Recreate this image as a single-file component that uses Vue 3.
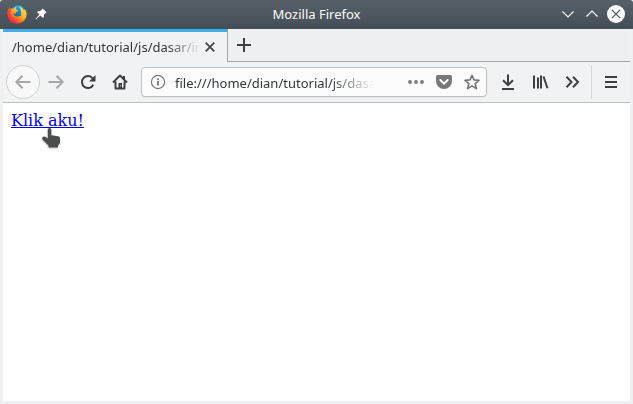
<script setup>
const tabTitle = '/home/dian/tutorial/js/dasar/index.html'
const address = 'file:///home/dian/tutorial/js/dasar/index.html'
</script>

<template>
  <div class="window">
    <header class="titlebar">
      <svg class="firefox" viewBox="0 0 20 20">
        <defs>
          <linearGradient id="flame" x1="0.9" y1="0.1" x2="0.2" y2="0.9">
            <stop offset="0" stop-color="#ffe04a" />
            <stop offset="0.35" stop-color="#ffc02a" />
            <stop offset="0.65" stop-color="#ff7a20" />
            <stop offset="1" stop-color="#ed1c54" />
          </linearGradient>
          <linearGradient id="globe" x1="0.6" y1="0" x2="0.3" y2="1">
            <stop offset="0" stop-color="#18b5f5" />
            <stop offset="1" stop-color="#174a9c" />
          </linearGradient>
        </defs>
        <circle cx="11" cy="8.600" r="7.300" fill="url(#globe)" />
        <path fill="url(#flame)" d="M2.600 3.200 4 5c1-.6 2-.6 3-.4.7-1 1.600-1.700 2.700-2-.7.9-.9 1.700-.6 2.600.8.8 2 .6 2.100 1.300 0 .8-1.500 1-2.100 1.800-.3.500.1 1.200-.5 1.400-.7.3-1.200-.1-1.800-.1.3 2 2 3.200 3.600 3 1.700-.1 2.700-1.300 4-1.100-.6-3.200.3-6-2.900-9.300C15 3 16.600 5 17 7l.7-2.100C19.400 7.200 20 9.700 19.400 12.200 18.300 16.800 14.600 19.500 10 19.500 4.900 19.500.800 15.500.500 10.500.400 7.800 1.200 5.200 2.600 3.200Z" />
        <path fill="#f2353c" d="M2.600 3.200C1.200 5.200.400 7.800.500 10.500c.3 5 4.400 9 9.500 9 1.300 0 2.500-.2 3.700-.7-4 .1-7.900-1.700-9.700-4.800C2.800 11.400 3.300 8 4 5Z" opacity=".75" />
      </svg>
      <svg class="pin" viewBox="0 0 12 12">
        <path fill="#fcfcfc" d="M7.600.4 11.600 4.300 10.500 4.900 8.900 6.700 8.800 9.300 7.800 9.700 5.300 7.400 1 11.500.5 11 4.400 6.600 2.200 4.200 2.800 3.200 5.200 3.100 7 1.500Z" />
      </svg>
      <div class="caption">Mozilla Firefox</div>
      <svg class="ctl" viewBox="0 0 24 24"><path d="M6.500 9.500 12 15l5.500-5.500" /></svg>
      <svg class="ctl" viewBox="0 0 24 24"><path d="M6.500 14.500 12 9l5.500 5.500" /></svg>
      <svg class="ctl close" viewBox="0 0 24 24">
        <circle cx="12" cy="12" r="9" />
        <path d="m7.800 7.800 8.400 8.400m0-8.400-8.400 8.400" />
      </svg>
    </header>

    <div class="tabs">
      <div class="tab">
        <span class="tab-title">{{ tabTitle }}</span>
        <svg class="tab-close" viewBox="0 0 12 12"><path d="m1.700 1.700 8.600 8.600m0-8.600-8.600 8.600" /></svg>
      </div>
      <div class="tab-rest">
        <svg class="plus" viewBox="0 0 16 16"><path d="M8 1v14M1 8h14" /></svg>
      </div>
    </div>

    <nav class="toolbar">
      <div class="cell back">
        <span class="ring">
          <svg class="icon faded" viewBox="0 0 16 16"><path d="M15.500 8H1.500M7.500 1.800 1.300 8l6.200 6.200" /></svg>
        </span>
      </div>
      <div class="cell forward">
        <svg class="icon faded" viewBox="0 0 16 16"><path d="M.5 8h14M8.500 1.800 14.700 8l-6.200 6.200" /></svg>
      </div>
      <div class="cell reload">
        <svg class="icon" viewBox="0 0 16 16">
          <path d="M12.700 4.300A6 6 0 1 0 13.300 10.800" />
          <path class="solid" d="M15.500 1v6.500H9Z" />
        </svg>
      </div>
      <div class="cell home">
        <svg class="icon" viewBox="0 0 16 16">
          <path d="M1 8.500 8 1.500l7 7M3.500 7.500v7h9v-7" stroke-linejoin="round" />
          <path class="solid" d="M6.500 9h3.500v6h-3.500Z" />
          <path class="solid" d="M11 2h2v4l-2-2Z" />
          <circle cx="8.800" cy="11.800" r=".6" class="knob" />
        </svg>
      </div>
      <div class="urlbar">
        <svg class="info" viewBox="0 0 16 16">
          <circle cx="8" cy="8" r="6.600" />
          <path d="M8 7v4.500M8 4.200v1.800" />
        </svg>
        <span class="address">{{ address }}</span>
        <svg class="dots" viewBox="0 0 16 16"><circle cx="2" cy="8" r="1.900" /><circle cx="8" cy="8" r="1.900" /><circle cx="14" cy="8" r="1.900" /></svg>
        <svg class="pocket" viewBox="0 0 16 16">
          <path class="pouch" d="M1.800 1h12.400c1 0 1.800.8 1.800 1.800V7a8 8 0 0 1-16 0V2.800C0 1.800.8 1 1.800 1Z" />
          <path class="tick" d="M4.300 6 8 9.600 11.700 6" />
        </svg>
        <svg class="star" viewBox="0 0 16 16"><path d="m8 1.300 2 4.600 5 .4-3.800 3.300 1.200 5L8 11.900l-4.400 2.700 1.200-5L1 6.300l5-.4Z" /></svg>
      </div>
      <div class="cell action">
        <svg class="icon" viewBox="0 0 16 16"><path d="M8 .5v10.300M3 6.200l5 5 5-5M2 15h12" /></svg>
      </div>
      <div class="cell action library">
        <svg class="icon" viewBox="0 0 16 16"><path d="M1 1.500v13M5 3.500v11M8 1.500v13M10.500 2.500l4 11.700" /></svg>
      </div>
      <div class="cell action">
        <svg class="icon" viewBox="0 0 16 16"><path d="m2.500 2.800 5 5.200-5 5.200M9 2.800l5 5.200-5 5.200" /></svg>
      </div>
      <div class="divider"></div>
      <div class="cell menu">
        <svg class="icon" viewBox="0 0 16 16"><path d="M2 3h12M2 8h12M2 13h12" /></svg>
      </div>
    </nav>

    <main class="page">
      <a class="link" href="#">Klik aku!</a>
      <svg class="pointer" viewBox="0 0 24 24">
        <path d="M11.500 1C12.500 1 13.300 1.700 13.300 2.800V8.200L20 9.200C21.300 9.400 22 10 22 11.200V16L20 18.500V20.500H10.500V18.500L4.700 12.800C3.700 11.500 4 10.200 5.300 9.700 6.700 9.300 8.300 10.200 9.800 11.800V2.800C9.800 1.700 10.500 1 11.500 1Z" />
      </svg>
    </main>
  </div>
</template>

<style>
body {
  margin: 0;
  overflow: hidden;
}
</style>

<style scoped>
.window {
  box-sizing: border-box;
  width: 633px;
  height: 404px;
  display: flex;
  flex-direction: column;
  background: #eff0f1;
  font-family: "Noto Sans", sans-serif;
  font-size: 13px;
  color: #31363b;
}
svg {
  display: block;
  flex: none;
  fill: none;
}
.titlebar {
  box-sizing: border-box;
  flex: none;
  height: 29px;
  padding: 0 5px 1px 7px;
  display: flex;
  align-items: center;
  background: linear-gradient(#566069, #454e56);
  border-radius: 3px 3px 0 0;
}
.firefox {
  width: 20px;
  height: 20px;
}
.pin {
  width: 12px;
  height: 12px;
  margin-left: 8px;
}
.caption {
  flex: 1;
  padding-left: 30px;
  text-align: center;
  color: #fcfcfc;
  line-height: 20px;
}
.ctl {
  width: 24px;
  height: 24px;
  stroke: #fcfcfc;
  stroke-width: 1.2;
}
.close circle {
  fill: #fcfcfc;
  stroke: none;
}
.close path {
  stroke: #475057;
}
.tabs {
  flex: none;
  height: 33px;
  margin: 0 3px;
  display: flex;
}
.tab {
  box-sizing: border-box;
  width: 225px;
  padding: 0 11px 1px 9px;
  display: flex;
  align-items: center;
  border-top: 3px solid #3daee9;
  border-right: 1px solid #a5a6a8;
  background: #f1f2f4;
}
.tab-title {
  flex: 1;
  overflow: hidden;
  white-space: nowrap;
  line-height: 20px;
  mask-image: linear-gradient(90deg, #000 155px, transparent 189px);
}
.tab-close {
  width: 12px;
  height: 12px;
  margin-left: 3px;
  stroke: #43474a;
  stroke-width: 1.8;
}
.tab-rest {
  box-sizing: border-box;
  flex: 1;
  padding: 8px 0 0 8px;
  border-bottom: 1px solid #a5a6a8;
  background: #eeeff1;
}
.plus {
  width: 16px;
  height: 16px;
  stroke: #3c4043;
  stroke-width: 2;
}
.toolbar {
  box-sizing: border-box;
  flex: none;
  height: 41px;
  margin: 0 3px;
  display: flex;
  align-items: center;
  background: #f1f2f4;
  border-bottom: 1px solid #bebfc0;
}
.cell {
  flex: none;
  display: flex;
  justify-content: center;
  align-items: center;
}
.back {
  width: 39px;
}
.ring {
  box-sizing: border-box;
  width: 34px;
  height: 34px;
  display: flex;
  justify-content: center;
  align-items: center;
  border: 1px solid #cfd0d1;
  border-radius: 50%;
  background: #f8f8f9;
}
.forward {
  width: 28px;
}
.reload {
  width: 36px;
}
.home {
  width: 27px;
}
.action {
  width: 32px;
}
.menu {
  width: 38px;
}
.icon {
  width: 16px;
  height: 16px;
  stroke: #3d4043;
  stroke-width: 2;
}
.faded {
  stroke: #a6a7a8;
}
.solid {
  fill: #3d4043;
  stroke: none;
}
.knob {
  fill: #f3f4f5;
  stroke: none;
}
.urlbar {
  box-sizing: border-box;
  width: 346px;
  height: 30px;
  margin: 0 5px 0 8px;
  padding: 0 5px 0 8px;
  display: flex;
  align-items: center;
  border: 1px solid #bfc0c1;
  border-radius: 4px;
  background: #fcfcfc;
  box-shadow: 0 1px 2px rgba(0, 0, 0, 0.06);
}
.info {
  width: 16px;
  height: 16px;
  stroke: #777879;
  stroke-width: 1.2;
}
.info path {
  stroke-width: 1.8;
}
.address {
  width: 198px;
  margin: 2px 35px 0 9px;
  overflow: hidden;
  white-space: nowrap;
  line-height: 20px;
  mask-image: linear-gradient(90deg, #000 155px, transparent 199px);
}
.dots {
  width: 16px;
  height: 16px;
  fill: #777879;
}
.pocket {
  width: 16px;
  height: 16px;
  margin-left: 12px;
}
.pouch {
  fill: #777879;
}
.tick {
  stroke: #fcfcfc;
  stroke-width: 1.9;
  stroke-linecap: round;
}
.star {
  width: 16px;
  height: 16px;
  margin-left: 12px;
  stroke: #777879;
  stroke-width: 1.7;
  stroke-linejoin: round;
}
.divider {
  width: 1px;
  height: 34px;
  margin-left: 3px;
  background: #d7d8d9;
}
.library {
  padding-left: 1px;
  margin-right: -1px;
}
.page {
  position: relative;
  flex: 1;
  margin: 0 3px 3px;
  padding: 8px;
  background: #fff;
}
.link {
  display: block;
  width: max-content;
  font: 16px/19px "DejaVu Serif", serif;
  color: #0000ee;
  text-decoration: underline;
}
.pointer {
  position: absolute;
  left: 35px;
  top: 24px;
  width: 24px;
  height: 24px;
  fill: #4b4c4d;
  filter: drop-shadow(0 1px 1px rgba(0, 0, 0, 0.25));
}
</style>
